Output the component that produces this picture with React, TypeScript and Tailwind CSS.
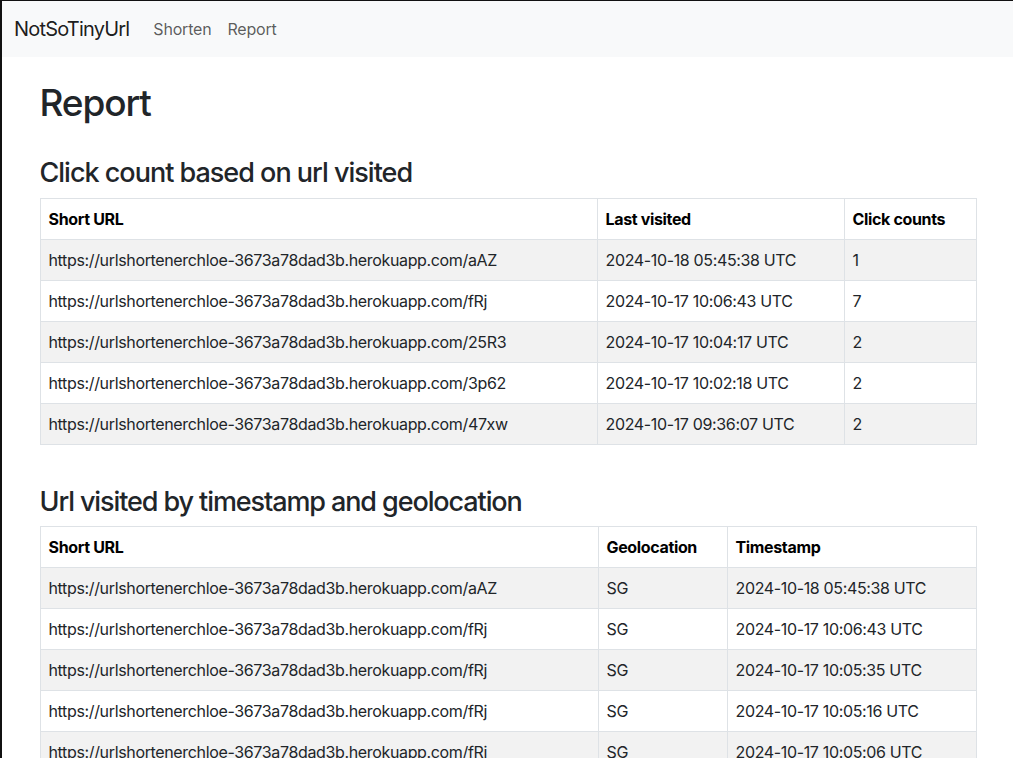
import React from "react";

const clickRows = [
  { url: "https://urlshortenerchloe-3673a78dad3b.herokuapp.com/aAZ", last: "2024-10-18 05:45:38 UTC", count: 1 },
  { url: "https://urlshortenerchloe-3673a78dad3b.herokuapp.com/fRj", last: "2024-10-17 10:06:43 UTC", count: 7 },
  { url: "https://urlshortenerchloe-3673a78dad3b.herokuapp.com/25R3", last: "2024-10-17 10:04:17 UTC", count: 2 },
  { url: "https://urlshortenerchloe-3673a78dad3b.herokuapp.com/3p62", last: "2024-10-17 10:02:18 UTC", count: 2 },
  { url: "https://urlshortenerchloe-3673a78dad3b.herokuapp.com/47xw", last: "2024-10-17 09:36:07 UTC", count: 2 },
];

const visitRows = [
  { url: "https://urlshortenerchloe-3673a78dad3b.herokuapp.com/aAZ", geo: "SG", time: "2024-10-18 05:45:38 UTC" },
  { url: "https://urlshortenerchloe-3673a78dad3b.herokuapp.com/fRj", geo: "SG", time: "2024-10-17 10:06:43 UTC" },
  { url: "https://urlshortenerchloe-3673a78dad3b.herokuapp.com/fRj", geo: "SG", time: "2024-10-17 10:05:35 UTC" },
  { url: "https://urlshortenerchloe-3673a78dad3b.herokuapp.com/fRj", geo: "SG", time: "2024-10-17 10:05:16 UTC" },
  { url: "https://urlshortenerchloe-3673a78dad3b.herokuapp.com/fRj", geo: "SG", time: "2024-10-17 10:05:06 UTC" },
  { url: "https://urlshortenerchloe-3673a78dad3b.herokuapp.com/fRj", geo: "SG", time: "2024-10-17 10:04:51 UTC" },
  { url: "https://urlshortenerchloe-3673a78dad3b.herokuapp.com/25R3", geo: "SG", time: "2024-10-17 10:04:17 UTC" },
];

const th = "border border-[#dee2e6] px-2 py-2 text-left font-bold text-black";
const td = "border border-[#dee2e6] px-2 py-2";

export default function App() {
  return (
    <div
      className="min-h-screen border-l-2 border-t border-[#111] bg-white text-[16px] leading-6 tracking-[-0.35px] text-[#212529]"
      style={{ fontFamily: "Inter, 'Noto Sans', sans-serif" }}
    >
      <nav className="flex h-14 items-center bg-[#f8f9fa] px-3">
        <span className="mr-4 text-[20px] leading-[30px] tracking-[-0.8px] text-black/90">NotSoTinyUrl</span>
        <a className="px-2 tracking-[-0.2px] text-black/65">Shorten</a>
        <a className="px-2 tracking-[-0.2px] text-black/65">Report</a>
      </nav>

      <div className="mx-auto mt-6 flex w-[960px] flex-col px-3">
        <h1 className="mb-2 text-[37px] leading-[1.2] font-medium tracking-[-1.1px]">Report</h1>

        <h3 className="mt-6 mb-2 text-[27px] leading-[1.2] font-medium tracking-[-1px]">
          Click count based on url visited
        </h3>
        <table className="mb-4 w-[936px] table-fixed">
          <thead>
            <tr>
              <th className={`${th} w-[557px]`}>Short URL</th>
              <th className={`${th} w-[247px]`}>Last visited</th>
              <th className={`${th} w-[132px]`}>Click counts</th>
            </tr>
          </thead>
          <tbody>
            {clickRows.map((r, i) => (
              <tr key={i} className={i % 2 === 0 ? "bg-[#f2f2f2]" : "bg-white"}>
                <td className={td}>{r.url}</td>
                <td className={td}>{r.last}</td>
                <td className={td}>{r.count}</td>
              </tr>
            ))}
          </tbody>
        </table>

        <h3 className="mt-[25px] mb-2 text-[27px] leading-[1.2] font-medium tracking-[-1.1px]">
          Url visited by timestamp and geolocation
        </h3>
        <table className="mb-4 w-[936px] table-fixed">
          <thead>
            <tr>
              <th className={`${th} w-[558px]`}>Short URL</th>
              <th className={`${th} w-[129px]`}>Geolocation</th>
              <th className={`${th} w-[249px]`}>Timestamp</th>
            </tr>
          </thead>
          <tbody>
            {visitRows.map((r, i) => (
              <tr key={i} className={i % 2 === 0 ? "bg-[#f2f2f2]" : "bg-white"}>
                <td className={td}>{r.url}</td>
                <td className={td}>{r.geo}</td>
                <td className={td}>{r.time}</td>
              </tr>
            ))}
          </tbody>
        </table>
      </div>
    </div>
  );
}
